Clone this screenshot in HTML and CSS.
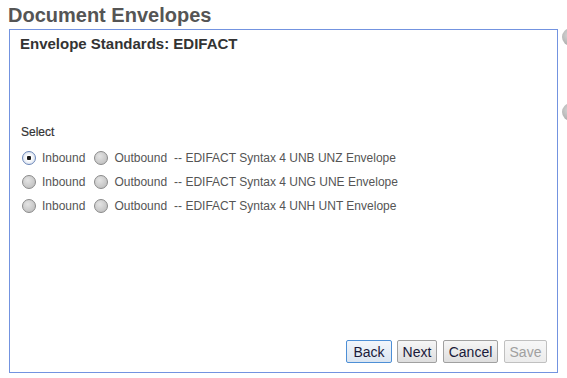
FILE: index.html
```html
<!DOCTYPE html>
<html lang="en">
<head>
    <meta charset="UTF-8">
    <title>Document Envelopes</title>
    <link rel="stylesheet" href="styles.css">
</head>
<body>

    <h1>Document Envelopes</h1>

    <div class="side-icons">
        <span class="side-icon"></span>
        <span class="side-icon"></span>
    </div>

    <div class="wizard">
        <h2>Envelope Standards: EDIFACT</h2>

        <div class="select-block">
            <div class="select-label">Select</div>
            <div class="env-row">
                <label><input type="radio" name="env1" checked> Inbound</label>
                <label><input type="radio" name="env1"> Outbound</label>
                <span class="env-name">-- EDIFACT Syntax 4 UNB UNZ Envelope</span>
            </div>
            <div class="env-row">
                <label><input type="radio" name="env2"> Inbound</label>
                <label><input type="radio" name="env2"> Outbound</label>
                <span class="env-name">-- EDIFACT Syntax 4 UNG UNE Envelope</span>
            </div>
            <div class="env-row">
                <label><input type="radio" name="env3"> Inbound</label>
                <label><input type="radio" name="env3"> Outbound</label>
                <span class="env-name">-- EDIFACT Syntax 4 UNH UNT Envelope</span>
            </div>
        </div>

        <div class="buttons">
            <button class="btn-back focused">Back</button>
            <button class="btn-next">Next</button>
            <button class="btn-cancel">Cancel</button>
            <button class="btn-save" disabled>Save</button>
        </div>
    </div>

</body>
</html>
```

FILE: styles.css
```css
body {
    font-family: "Liberation Sans", Arial, sans-serif;
    margin: 0;
    padding: 0;
    background-color: #fff;
    position: relative;
    width: 567px;
    height: 378px;
    overflow: hidden;
}

h1 {
    font-size: 20px;
    color: #555;
    margin: 0;
    padding: 3px 0 0 8px;
    height: 26px;
    line-height: 24px;
}

.wizard {
    margin-left: 9px;
    width: 547px;
    height: 342px;
    border: 1px solid #7393e0;
    display: flex;
    flex-direction: column;
}

h2 {
    font-size: 15px;
    color: #333;
    margin: 0;
    padding: 5px 0 0 10px;
    line-height: 17px;
}

.select-block {
    margin-top: 73px;
    padding-left: 11px;
    font-size: 12px;
    color: #555;
}

.select-label {
    color: #333;
    -webkit-text-stroke: 0.2px #333;
    line-height: 14px;
    margin-bottom: 7px;
}

.env-row {
    display: flex;
    align-items: center;
    height: 24px;
}

.env-row label {
    display: flex;
    align-items: center;
}

.env-row label + label {
    margin-left: 8px;
}

.env-name {
    margin-left: 7px;
}

input[type="radio"] {
    -webkit-appearance: none;
    appearance: none;
    width: 14px;
    height: 14px;
    margin: 0 6px 0 1px;
    border: 1px solid #8a8a8a;
    border-radius: 50%;
    background: radial-gradient(circle at 40% 35%, #e4e4e4, #b8b8b8);
}

input[type="radio"]:checked {
    border-color: #6b86b8;
    background: radial-gradient(circle, #1a1a1a 0, #1a1a1a 2px, #fff 2.5px, #dfe6f1 6px);
}

.buttons {
    margin-top: auto;
    display: flex;
    justify-content: flex-end;
    gap: 6px;
    padding: 0 10px 9px 0;
}

button {
    font-family: "Liberation Sans", Arial, sans-serif;
    font-size: 14px;
    color: #1a1a3a;
    height: 23px;
    padding: 0;
    border: 1px solid #a0a0a0;
    border-radius: 2px;
    background: linear-gradient(#f6f6f6, #dedede);
}

.btn-back {
    width: 46px;
    margin-right: -1px;
}

.btn-next {
    width: 40px;
}

.btn-cancel {
    width: 55px;
}

.btn-save {
    width: 43px;
}

button.focused {
    border-color: #4d8fd6;
    background: linear-gradient(#f2f6fb, #dbe5f1);
}

button:disabled {
    color: #a0a0a0;
    border-color: #c0c0c0;
    background: linear-gradient(#f7f7f7, #ececec);
}

.side-icon {
    position: absolute;
    left: 562px;
    width: 18px;
    height: 18px;
    border-radius: 50%;
    background: radial-gradient(circle at 40% 40%, #d8d8d8, #9a9a9a);
}

.side-icon:first-child {
    top: 28px;
}

.side-icon:last-child {
    top: 103px;
}
```
